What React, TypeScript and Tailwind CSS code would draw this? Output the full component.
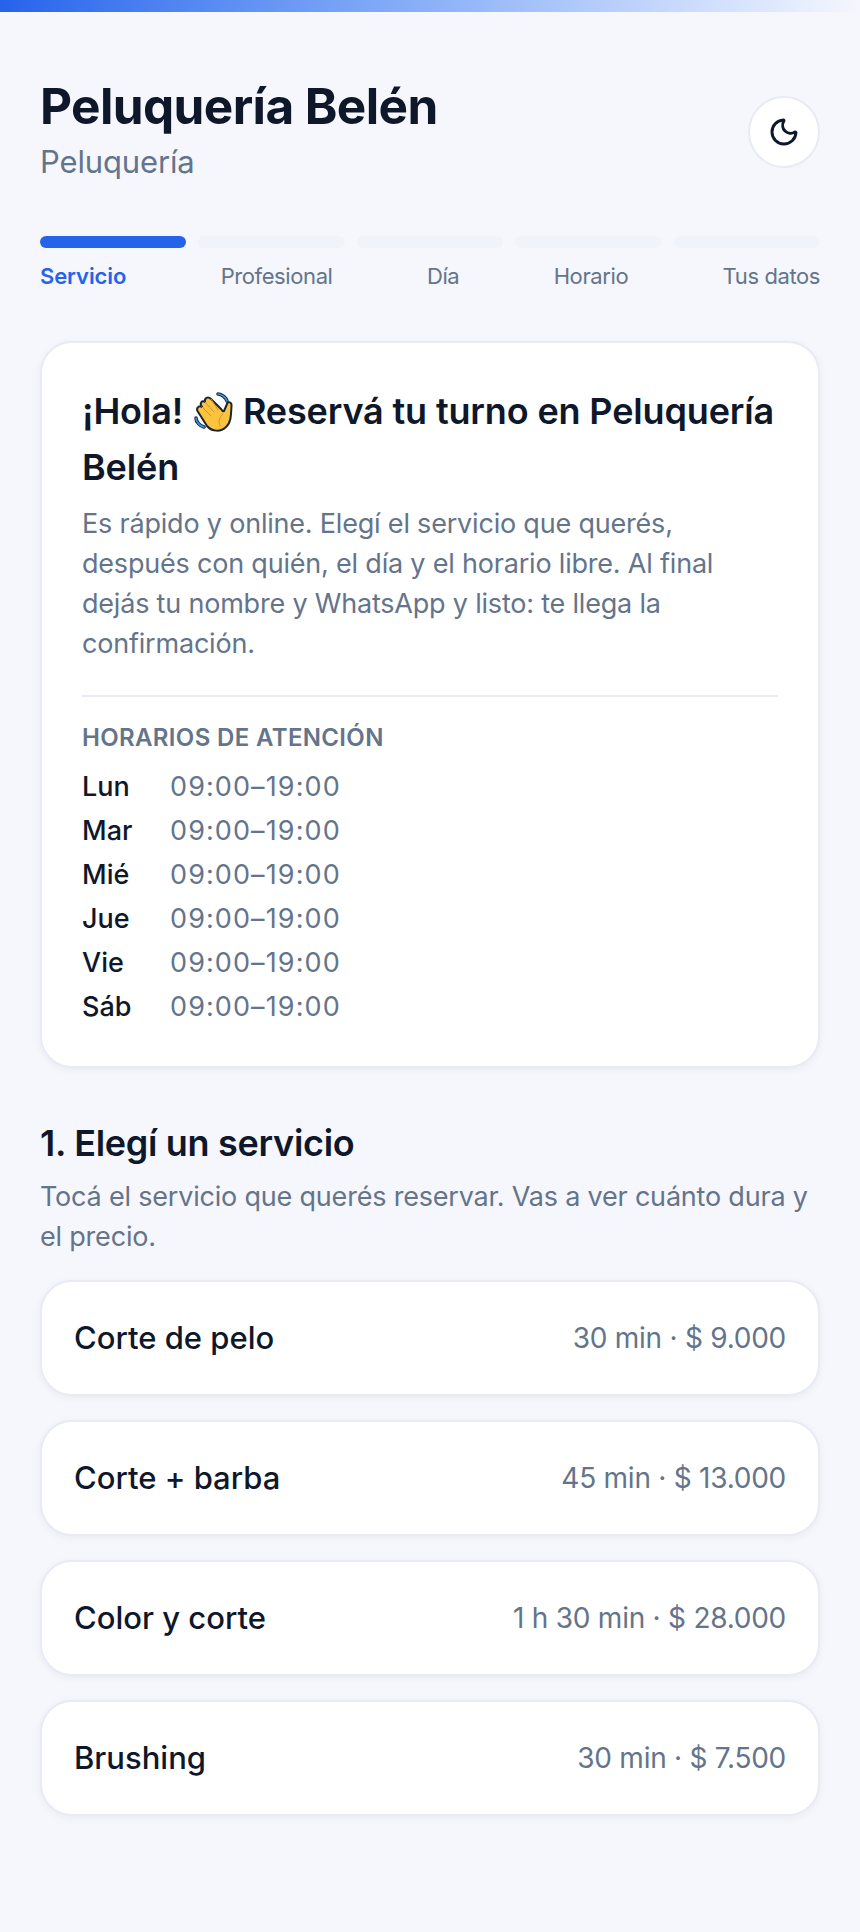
import { Moon } from 'lucide-react';

const steps = ['Servicio', 'Profesional', 'Día', 'Horario', 'Tus datos'];

const hours = ['Lun', 'Mar', 'Mié', 'Jue', 'Vie', 'Sáb'];

const services = [
  { name: 'Corte de pelo', info: '30 min · $ 9.000' },
  { name: 'Corte + barba', info: '45 min · $ 13.000' },
  { name: 'Color y corte', info: '1 h 30 min · $ 28.000' },
  { name: 'Brushing', info: '30 min · $ 7.500' },
];

// waving hand, drawn so it keeps the outlined look of the reference
function WaveIcon() {
  const hand =
    'M13 36 L3.5 21 C2 18 5 15 8 17 C5 13 8 10 11 12 C10 8 14 6 17 9 L27 19 C28 20 29 22 30 21 L33 14 C34 11 38 12 37.5 16 C37 25 37 33 32 37 C27 42 18 42 13 36 Z';
  const topArc = 'M24 4 C28 4 32 8 33 11';
  const bottomArc = 'M2 28 C2 32 6 36 10 37';
  return (
    <svg viewBox="0 0 40 42" className="mb-[-8px] ml-[2px] inline-block h-[42px] w-[40px] -translate-y-[7px]" aria-hidden="true">
      <g fill="none" strokeLinecap="round" strokeLinejoin="round">
        <path d={topArc} stroke="#1c2333" strokeWidth="3.6" />
        <path d={topArc} stroke="#3b9be8" strokeWidth="1.6" />
        <path d={bottomArc} stroke="#1c2333" strokeWidth="3.6" />
        <path d={bottomArc} stroke="#3b9be8" strokeWidth="1.6" />
        <path d={hand} fill="#fcc43e" stroke="#1c2333" strokeWidth="2" />
        <path d="M8 17 L17 26 M11 12 L20 22 M17 9 L24 20" stroke="#d9912b" strokeWidth="1" />
        <path d="M29 24 C25 27 24 32 26 36" stroke="#d9912b" strokeWidth="1" />
      </g>
    </svg>
  );
}

export default function App() {
  return (
    <div className="min-h-[1932px] bg-[#f5f7fc] font-['Inter',sans-serif] text-[#0f172a]">
      <div className="h-3 bg-gradient-to-r from-[#2563eb] to-[#f5f7fc]" />
      <div className="px-10 pt-[66px]">
        <header className="flex items-center justify-between">
          <div>
            <h1 className="text-[49.5px] leading-[56px] font-bold tracking-[-0.6px]">Peluquería Belén</h1>
            <p className="mt-[8px] text-[31px] leading-[40px] tracking-[-0.15px] text-[#64748b]">Peluquería</p>
          </div>
          <button className="mt-[4px] flex h-[72px] w-[72px] items-center justify-center rounded-full border-2 border-[#e8eaf6] bg-white">
            <Moon className="h-8 w-8" strokeWidth={2.2} />
          </button>
        </header>

        <div className="mt-[54px] flex gap-3">
          {steps.map((s, i) => (
            <div key={s} className={i === 0 ? 'h-3 flex-1 rounded-full bg-[#2563eb]' : 'h-3 flex-1 rounded-full bg-[#f1f3fb]'} />
          ))}
        </div>
        <div className="mt-[14px] flex justify-between text-[22px] leading-[28px] tracking-[-0.4px] text-[#64748b]">
          {steps.map((s, i) => (
            <span key={s} className={i === 0 ? 'font-semibold tracking-[-0.1px] text-[#2563eb]' : ''}>{s}</span>
          ))}
        </div>

        <section className="mt-[51px] rounded-[32px] border-2 border-[#e8eaf6] bg-white px-10 pt-[40px] pb-[37px] shadow-[0_2px_8px_rgba(15,23,42,0.05)]">
          <h2 className="text-[36px] leading-[56px] font-semibold tracking-[-0.15px]">¡Hola! <WaveIcon /> Reservá tu turno en Peluquería Belén</h2>
          <p className="mt-[9px] text-[27px] leading-[40px] tracking-[-0.2px] text-[#64748b]">
            Es rápido y online. Elegí el servicio que querés, después con quién, el día y el horario libre. Al final dejás tu nombre y WhatsApp y listo: te llega la confirmación.
          </p>
          <div className="mt-[31px] border-t-2 border-[#e8eaf6] pt-[25px]">
            <h3 className="text-[24px] leading-[32px] font-semibold tracking-[0.35px] text-[#64748b]">HORARIOS DE ATENCIÓN</h3>
            <ul className="mt-[11px]">
              {hours.map((d) => (
                <li key={d} className="flex text-[27px] leading-[44px]">
                  <span className="w-[88px] font-medium">{d}</span>
                  <span className="tracking-[1.1px] text-[#64748b]">09:00–19:00</span>
                </li>
              ))}
            </ul>
          </div>
        </section>

        <h2 className="mt-[51px] text-[36px] leading-[48px] font-semibold tracking-[-0.3px]">1. Elegí un servicio</h2>
        <p className="mt-[10px] text-[27px] leading-[40px] tracking-[-0.2px] text-[#64748b]">Tocá el servicio que querés reservar. Vas a ver cuánto dura y el precio.</p>

        <div className="mt-[23px] flex flex-col gap-[24px]">
          {services.map((s) => (
            <div key={s.name} className="flex h-[116px] items-center justify-between rounded-[32px] border-2 border-[#e8eaf6] bg-white px-8 shadow-[0_2px_8px_rgba(15,23,42,0.05)]">
              <span className="text-[31px] font-medium">{s.name}</span>
              <span className="text-[28px] tracking-[-0.25px] text-[#64748b]">{s.info}</span>
            </div>
          ))}
        </div>
      </div>
    </div>
  );
}
